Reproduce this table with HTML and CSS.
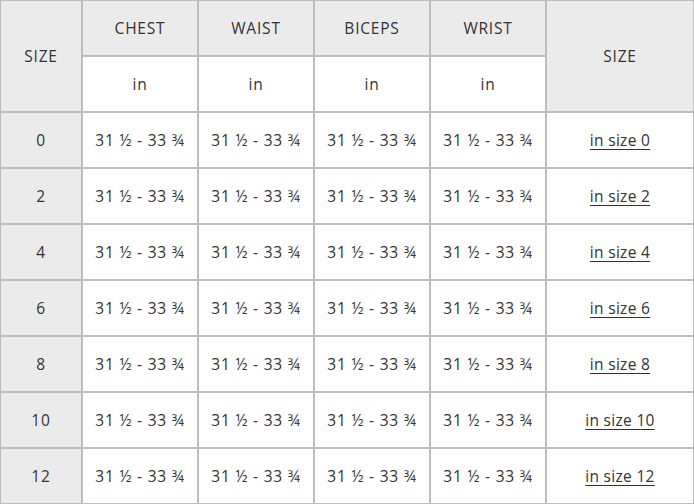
FILE: index.html
```html
<!DOCTYPE html>
<html>
<head>
<meta charset="utf-8">
<link rel="stylesheet" href="styles.css">
</head>
<body>
<table class="size-table">
  <colgroup>
    <col class="c-size">
    <col class="c-m"><col class="c-m"><col class="c-m"><col class="c-m">
    <col class="c-link">
  </colgroup>
  <thead>
    <tr>
      <th rowspan="2">SIZE</th>
      <th>CHEST</th>
      <th>WAIST</th>
      <th>BICEPS</th>
      <th>WRIST</th>
      <th rowspan="2">SIZE</th>
    </tr>
    <tr class="units">
      <td>in</td><td>in</td><td>in</td><td>in</td>
    </tr>
  </thead>
  <tbody>
    <tr><th>0</th><td>31 ½ - 33 ¾</td><td>31 ½ - 33 ¾</td><td>31 ½ - 33 ¾</td><td>31 ½ - 33 ¾</td><td><a href="#">in size 0</a></td></tr>
    <tr><th>2</th><td>31 ½ - 33 ¾</td><td>31 ½ - 33 ¾</td><td>31 ½ - 33 ¾</td><td>31 ½ - 33 ¾</td><td><a href="#">in size 2</a></td></tr>
    <tr><th>4</th><td>31 ½ - 33 ¾</td><td>31 ½ - 33 ¾</td><td>31 ½ - 33 ¾</td><td>31 ½ - 33 ¾</td><td><a href="#">in size 4</a></td></tr>
    <tr><th>6</th><td>31 ½ - 33 ¾</td><td>31 ½ - 33 ¾</td><td>31 ½ - 33 ¾</td><td>31 ½ - 33 ¾</td><td><a href="#">in size 6</a></td></tr>
    <tr><th>8</th><td>31 ½ - 33 ¾</td><td>31 ½ - 33 ¾</td><td>31 ½ - 33 ¾</td><td>31 ½ - 33 ¾</td><td><a href="#">in size 8</a></td></tr>
    <tr><th>10</th><td>31 ½ - 33 ¾</td><td>31 ½ - 33 ¾</td><td>31 ½ - 33 ¾</td><td>31 ½ - 33 ¾</td><td><a href="#">in size 10</a></td></tr>
    <tr><th>12</th><td>31 ½ - 33 ¾</td><td>31 ½ - 33 ¾</td><td>31 ½ - 33 ¾</td><td>31 ½ - 33 ¾</td><td><a href="#">in size 12</a></td></tr>
  </tbody>
</table>
</body>
</html>
```
FILE: styles.css
```css
html, body {
  margin: 0;
  padding: 0;
  background: #fff;
  overflow: hidden;
}
.size-table {
  border-collapse: separate;
  border-spacing: 2px;
  table-layout: fixed;
  width: 696px;
  margin: -1px 0 0 -1px;
  background: #bebebe;
  font-family: "Open Sans", "DejaVu Sans", sans-serif;
  font-size: 15.5px;
  letter-spacing: 0.8px;
  color: #333;
}
.c-size { width: 80px; }
.c-m { width: 114px; }
.c-link { width: 146px; }
.size-table th,
.size-table td {
  border: 0;
  text-align: center;
  vertical-align: middle;
  padding: 0 0 1px;
  font-weight: 400;
  height: 53px;
  background: #fff;
}
.size-table th {
  background: #ebebeb;
}
.size-table a {
  color: #333;
  letter-spacing: 0.3px;
  text-decoration: underline;
  text-underline-offset: 3px;
}
```
